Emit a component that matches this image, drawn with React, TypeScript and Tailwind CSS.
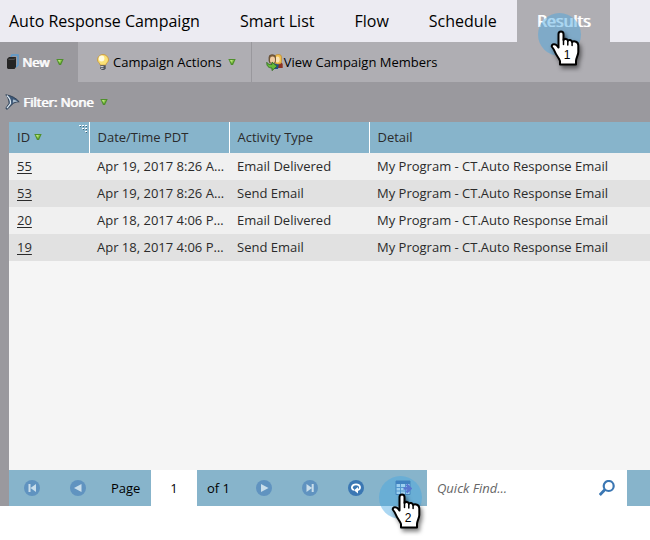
import type { ReactNode } from "react";
import { clsx } from "clsx";

interface Activity {
  id: number;
  date: string;
  type: string;
  detail: string;
}

const TABS = ["Smart List", "Flow", "Schedule"];

const ACTIVITIES: Activity[] = [
  { id: 55, date: "Apr 19, 2017 8:26 AM", type: "Email Delivered", detail: "My Program - CT.Auto Response Email" },
  { id: 53, date: "Apr 19, 2017 8:26 AM", type: "Send Email", detail: "My Program - CT.Auto Response Email" },
  { id: 20, date: "Apr 18, 2017 4:06 PM", type: "Email Delivered", detail: "My Program - CT.Auto Response Email" },
  { id: 19, date: "Apr 18, 2017 4:06 PM", type: "Send Email", detail: "My Program - CT.Auto Response Email" },
];

function Caret() {
  return (
    <svg className="shrink-0" width="8" height="8" viewBox="0 0 8 8" aria-hidden="true">
      <path d="M.3 1h7.400L5 7H3z" fill="#4f8f2c" />
      <path d="M1.500 2h4.500L4 5.800z" fill="#8fcb4c" />
      <path d="M2 2h2.500L3.500 4z" fill="#b9e283" />
    </svg>
  );
}

function BookIcon() {
  return (
    <svg className="shrink-0" width="12" height="16" viewBox="0 0 12 16" aria-hidden="true">
      <path d="M4 3 5 1h6v10l-2 2" fill="none" stroke="#5a9bd0" strokeWidth="1.500" />
      <path d="M0 5 2 3h7v10l-1.500 2H1l-1-1z" fill="#252525" />
      <path d="M1.500 5.300h5.700L8.500 4" fill="none" stroke="#777" strokeWidth=".6" />
    </svg>
  );
}

function BulbIcon() {
  return (
    <svg className="shrink-0" width="14" height="16" viewBox="0 0 14 16" aria-hidden="true">
      <path
        d="M7 .5a5.500 5.500 0 0 0-5.500 5.400C1.500 8.200 4 9 4.300 11.200h5.400C10 9 12.500 8.200 12.500 5.900A5.500 5.500 0 0 0 7 .5z"
        fill="#fbe277"
        stroke="#c9973c"
        strokeWidth=".9"
      />
      <ellipse cx="5.600" cy="4.600" rx="2.800" ry="3" fill="#fffbe0" />
      <path d="M4.300 11.300h5.400v3.200l-1.500 1.500H5.800l-1.500-1.500z" fill="#50545c" />
      <path d="M4.500 12.500h3M5 14.300h2.500" stroke="#d8dbe0" strokeWidth=".9" />
    </svg>
  );
}

function MembersIcon() {
  return (
    <svg className="shrink-0" width="17" height="17" viewBox="0 0 17 17" aria-hidden="true">
      <path d="M10.500 8.500h5l1.200 1.500v4H10z" fill="#8e3423" />
      <path d="M8 9.500 7.500 15H12l1-5.500z" fill="#23508c" />
      <rect x="9" y=".5" width="6.500" height="9.500" rx="2.600" fill="#f2c14c" stroke="#b98532" strokeWidth=".7" />
      <ellipse cx="11.500" cy="5.500" rx="2.200" ry="3" fill="#fbe3b6" />
      <rect x="3" y=".8" width="6.500" height="8.500" rx="2.600" fill="#80623e" stroke="#554128" strokeWidth=".7" />
      <ellipse cx="6.500" cy="5.900" rx="2.500" ry="3.300" fill="#f1cca2" />
      <path
        d="M.8 8.300c1.200 2 2.700 2.400 5.200 2.200V8l5 4.300-5 4.300V14C2.500 14 .5 12 .8 8.300z"
        fill="#67bb3a"
        stroke="#2c681d"
        strokeWidth=".8"
        strokeLinejoin="round"
      />
    </svg>
  );
}

function FunnelIcon() {
  return (
    <svg className="shrink-0" width="15" height="16" viewBox="0 0 15 16" aria-hidden="true">
      <path
        d="M.8.800C6 1.300 11 4 14.200 7.800 11 7.700 8.700 8.700 7 10.600L2 15.400.800 14.300l3.300-5C4 6 2.800 3.200.800.800z"
        fill="#3d5878"
        stroke="#27384d"
        strokeWidth=".8"
        strokeLinejoin="round"
      />
      <path d="M1.800 1.500c2.700 2.200 4 5 3.700 8.100L2 14.200" fill="none" stroke="#dbe6ee" strokeWidth="1.300" />
      <path d="M8 5.500c1.700.3 3.500 1.200 5 2.300-2-.2-3.700.1-5.200 1" fill="#a9bccd" />
    </svg>
  );
}

function ExportIcon() {
  return (
    <svg width="17" height="16" viewBox="0 0 17 16" aria-hidden="true">
      <path d="M1 1h14v13.500H1z" fill="#e3f2fc" stroke="#41699f" />
      <path d="M1 1h14v3H1z" fill="#3c66a5" />
      <path d="M5.500 4v10M10.500 4v10M1 7.500h14M1 11h14" stroke="#5b8bbd" />
      <path d="M8.500 8.500H15M11.500 4.500l4 4-4 4" fill="none" stroke="#6a4fc0" strokeWidth="2.500" />
    </svg>
  );
}

interface PagerButtonProps {
  label: string;
  active?: boolean;
  children: ReactNode;
}

function PagerButton({ label, active, children }: PagerButtonProps) {
  return (
    <button type="button" aria-label={label} className="flex w-[46px] shrink-0 items-center justify-center">
      <svg width="16" height="16" viewBox="0 0 16 16" aria-hidden="true">
        <circle cx="8" cy="8" r="8" className={clsx(active ? "fill-[#3b77b3]" : "fill-[#6093c0]")} />
        {children}
      </svg>
    </button>
  );
}

function StepPointer({ step }: { step: number }) {
  return (
    <svg className="pointer-events-none absolute z-10" width="48" height="60" viewBox="0 0 48 60" aria-hidden="true">
      <circle cx="21.500" cy="21.500" r="21.500" fill="#45a7e3" fillOpacity=".45" />
      <path
        className="drop-shadow-[2px_3px_2px_rgba(0,0,0,0.5)]"
        d="M20.500 34.500V21a2.500 2.500 0 0 1 5 0v6c1-1.800 4-1.300 4.300.7 1.200-1.300 3.800-.8 4.300 1.200 2-1.300 6.200-.4 6.200 3.600V39c0 3-2 5-2.300 9v3.500H22V48c-1-3-4-6-5-9-.8-2.300-2-3.800-3.300-5.500 0-3 4-2.700 5.300-.8z"
        fill="#fff"
        stroke="#000"
        strokeWidth="2"
        strokeLinejoin="round"
      />
      <path d="M25.500 26v5.500M29.800 28v4M34.100 29v3.500" stroke="#000" strokeWidth="1.500" strokeLinecap="round" />
      <text x="29" y="46" textAnchor="middle" className="fill-black font-['Liberation_Sans',sans-serif] text-[12px] font-normal [text-shadow:none]">
        {step}
      </text>
    </svg>
  );
}

function TopTabs() {
  return (
    <header className="flex h-[42px] shrink-0 bg-[#ecebf2] text-base whitespace-nowrap">
      <h1 className="flex items-center pr-5 pl-[9px]">Auto Response Campaign</h1>
      <nav className="flex">
        {TABS.map((tab) => (
          <button key={tab} type="button" className="px-5">
            {tab}
          </button>
        ))}
        <button type="button" className="relative bg-[#afaeb3] px-5 text-white [text-shadow:1px_0_0_currentColor]">
          Results
          <span className="absolute top-[13px] left-[21px]">
            <StepPointer step={1} />
          </span>
        </button>
      </nav>
    </header>
  );
}

function Toolbar() {
  return (
    <div className="flex h-10 shrink-0 bg-[#afaeb3] whitespace-nowrap">
      <button
        type="button"
        className="flex w-[78px] items-center gap-[3px] bg-[#9a999e] pl-[7px] text-white [text-shadow:1px_0_0_currentColor]"
      >
        <BookIcon />
        New
        <span className="ml-1">
          <Caret />
        </span>
      </button>
      <button type="button" className="flex items-center gap-[3px] border-r border-[#99989d] pr-[15px] pl-[18px]">
        <BulbIcon />
        Campaign Actions
        <span className="ml-[3px]">
          <Caret />
        </span>
      </button>
      <button type="button" className="flex items-center gap-px pl-[14px]">
        <MembersIcon />
        View Campaign Members
      </button>
    </div>
  );
}

function HeaderCell({ label, children }: { label: string; children?: ReactNode }) {
  return (
    <th scope="col" className="relative h-[31px] p-0 pb-[2px] pl-2 text-left font-normal">
      <span className="flex items-center gap-1">
        {label}
        {children}
      </span>
    </th>
  );
}

function ActivityTable() {
  return (
    <table className="w-full table-fixed border-collapse text-[#2b2b2b]">
      <colgroup>
        <col className="w-20" />
        <col className="w-[140px]" />
        <col className="w-[140px]" />
        <col />
      </colgroup>
      <thead className="bg-[#87b4cb]">
        <tr className="divide-x divide-white">
          <HeaderCell label="ID">
            <Caret />
            <svg className="absolute top-[3px] right-px" width="9" height="9" viewBox="0 0 9 9" aria-hidden="true">
              <path d="M0 .5h9M3 3.500h6M6 6.500h3" stroke="#fff" strokeDasharray="2 1" />
              <path d="M1 1.500h8M4 4.500h5M7 7.500h2" stroke="#3f6478" strokeDasharray="1 2" />
            </svg>
          </HeaderCell>
          <HeaderCell label="Date/Time PDT" />
          <HeaderCell label="Activity Type" />
          <HeaderCell label="Detail" />
        </tr>
      </thead>
      <tbody>
        {ACTIVITIES.map((activity) => (
          <tr key={activity.id} className="h-[27px] odd:bg-[#f0f0f0] even:bg-[#e1e1e1]">
            <td className="p-0 pb-[2px] pl-2">
              <a href={`#activity-${activity.id}`} className="underline underline-offset-2">
                {activity.id}
              </a>
            </td>
            <td className="truncate p-0 pr-1 pb-[2px] pl-2">{activity.date}</td>
            <td className="truncate p-0 pb-[2px] pl-2">{activity.type}</td>
            <td className="truncate p-0 pb-[2px] pl-2">{activity.detail}</td>
          </tr>
        ))}
      </tbody>
    </table>
  );
}

function Pager() {
  return (
    <footer className="flex h-9 shrink-0 bg-[#87b4cb] whitespace-nowrap">
      <PagerButton label="First page">
        <path d="M4.500 4h2v8h-2zM12 4v8L6.500 8z" fill="#c9deeb" />
      </PagerButton>
      <PagerButton label="Previous page">
        <path d="M11.500 4v8L4 8z" fill="#c9deeb" />
      </PagerButton>
      <label htmlFor="page" className="flex w-[50px] items-center pb-px pl-[10px]">
        Page
      </label>
      <input id="page" defaultValue="1" className="w-[46px] bg-white text-center outline-none" />
      <span className="flex w-11 items-center pl-[10px]">of 1</span>
      <PagerButton label="Next page">
        <path d="M5 4v8l7.500-4z" fill="#c9deeb" />
      </PagerButton>
      <PagerButton label="Last page">
        <path d="M9.700 4h2v8h-2zM4.500 4v8L10 8z" fill="#c9deeb" />
      </PagerButton>
      <PagerButton label="Refresh" active>
        <path d="M6 10C2.500 9 3.500 4.300 8 4.300s5.500 4.700 1.500 5.900" fill="none" stroke="#fff" strokeWidth="1.800" />
        <path d="M10 7v6.500L6 10.200z" fill="#fff" />
      </PagerButton>
      <button type="button" aria-label="Export" className="relative flex w-12 shrink-0 items-center justify-center">
        <ExportIcon />
        <span className="absolute top-[6px] left-0">
          <StepPointer step={2} />
        </span>
      </button>
      <div className="flex w-[200px] items-center bg-white pr-3 pl-[10px]">
        <input
          aria-label="Quick Find"
          placeholder="Quick Find..."
          className="min-w-0 flex-1 pb-px italic outline-none placeholder:text-[#666]"
        />
        <button type="button" aria-label="Search">
          <svg width="16" height="16" viewBox="0 0 16 16" fill="none" stroke="#3b77b3" aria-hidden="true">
            <circle cx="9.700" cy="6" r="5" strokeWidth="2.200" />
            <path d="M6 9.500.800 15" strokeWidth="2.800" />
          </svg>
        </button>
      </div>
    </footer>
  );
}

export default function App() {
  return (
    <div className="flex h-screen flex-col overflow-hidden bg-white pb-[34px] font-['Open_Sans',sans-serif] text-[13px] leading-5 text-black">
      <TopTabs />
      <Toolbar />
      <main className="flex min-h-0 flex-1 flex-col bg-[#9a999e] pl-[9px]">
        <button
          type="button"
          className="-ml-1 flex h-10 shrink-0 items-center gap-[3px] self-start text-white [text-shadow:1px_0_0_currentColor]"
        >
          <FunnelIcon />
          Filter: None
          <span className="ml-1">
            <Caret />
          </span>
        </button>
        <section className="min-h-0 flex-1 bg-[#f5f5f5]">
          <ActivityTable />
        </section>
        <Pager />
      </main>
    </div>
  );
}
